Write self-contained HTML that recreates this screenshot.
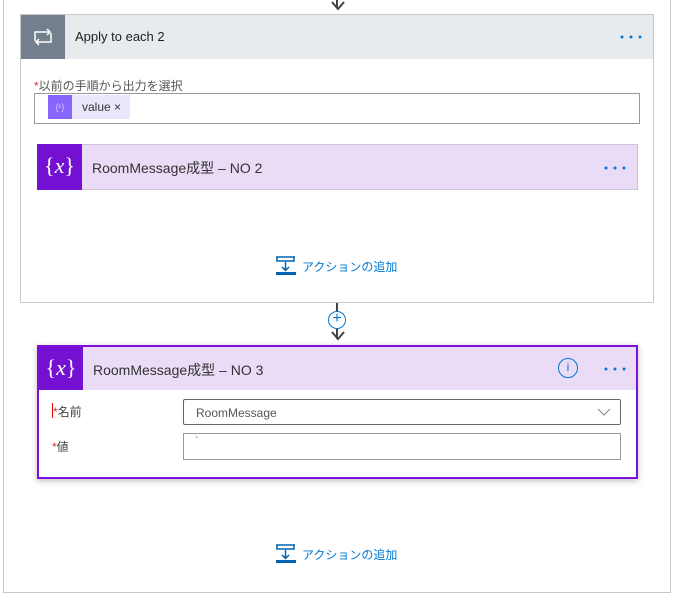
<!DOCTYPE html>
<html><head><meta charset="utf-8"><style>
*{box-sizing:border-box;margin:0;padding:0}
body{width:683px;height:595px;background:#fff;position:relative;overflow:hidden;font-family:"Liberation Sans","Noto Sans CJK JP",sans-serif;color:#333}
.a{position:absolute}
.add{color:#0078d4;font-size:12px}
</style></head><body>
<div class="a" style="left:3px;top:-2px;width:668px;height:595px;border:1px solid #c8c8c8"></div>
<div class="a" style="left:336px;top:0;width:2px;height:8px;background:#444"></div>
<svg class="a" style="left:330px;top:0" width="16" height="14"><path d="M2 2 L8 9 L14 2" stroke="#444" stroke-width="2" fill="none"/></svg>
<!-- apply to each -->
<div class="a" style="left:20px;top:14px;width:634px;height:289px;border:1px solid #c8c8c8;background:#fff"></div>
<div class="a" style="left:21px;top:15px;width:632px;height:44px;background:#e8ebee"></div>
<div class="a" style="left:21px;top:15px;width:44px;height:44px;background:#737f8c"></div>
<svg class="a" style="left:31px;top:28px" width="24" height="18"><path d="M4 13 V4 H19 M16 1 L19 4 L16 7 M20 5 V14 H5 M8 11 L5 14 L8 17" stroke="#fff" stroke-width="1.5" fill="none"/></svg>
<div class="a" style="left:75px;top:29px;font-size:13px;color:#222">Apply to each 2</div>
<svg class="a" style="left:620px;top:35px" width="22" height="4"><circle cx="2" cy="2" r="1.5" fill="#0078d4"/><circle cx="11" cy="2" r="1.5" fill="#0078d4"/><circle cx="20" cy="2" r="1.5" fill="#0078d4"/></svg>
<div class="a" style="left:34px;top:77px;font-size:12px;color:#555"><span style="color:#d13438">*</span>以前の手順から出力を選択</div>
<div class="a" style="left:34px;top:93px;width:606px;height:31px;border:1px solid #999"></div>
<div class="a" style="left:48px;top:95px;width:82px;height:24px;background:#ece6fc"></div>
<div class="a" style="left:48px;top:95px;width:24px;height:24px;background:#8766fb;color:#d8ccff;font-size:9px;text-align:center;line-height:24px">{ᵋ}</div>
<div class="a" style="left:82px;top:100px;font-size:12px;color:#333">value ×</div>
<div class="a" style="left:37px;top:144px;width:601px;height:46px;background:#eadbf7;border:1px solid #cfc3da"></div>
<div class="a" style="left:37px;top:144px;width:45px;height:46px;background:#7310d2;color:#fff;font-family:'Liberation Serif',serif;font-size:22px;text-align:center;line-height:44px">{<i>x</i>}</div>
<div class="a" style="left:92px;top:158px;font-size:14px;color:#333">RoomMessage成型 – NO 2</div>
<svg class="a" style="left:604px;top:166px" width="22" height="4"><circle cx="2" cy="2" r="1.5" fill="#0078d4"/><circle cx="11" cy="2" r="1.5" fill="#0078d4"/><circle cx="20" cy="2" r="1.5" fill="#0078d4"/></svg>
<svg class="a" style="left:275px;top:255px" width="22" height="22"><path d="M1 2 H20 M2 2 V6 H19 V2 M10.5 7 V15 M7 12 L10.5 15.5 L14 12" stroke="#0063b1" stroke-width="1.5" fill="none"/><rect x="1" y="17" width="20" height="3" fill="#0063b1"/></svg>
<div class="a add" style="left:302px;top:258px">アクションの追加</div>
<!-- connector -->
<div class="a" style="left:336px;top:303px;width:2px;height:36px;background:#444"></div>
<div class="a" style="left:328px;top:311px;width:18px;height:18px;border:1.5px solid #0078d4;border-radius:50%;background:#fff;color:#0078d4;font-size:16px;line-height:14px;text-align:center">+</div>
<svg class="a" style="left:330px;top:330px" width="16" height="14"><path d="M2 2 L8 9 L14 2" stroke="#444" stroke-width="2" fill="none"/></svg>
<!-- NO 3 -->
<div class="a" style="left:37px;top:345px;width:601px;height:134px;border:2px solid #7a10d9;background:#fff;box-shadow:0 2px 6px rgba(0,0,0,.25)"></div>
<div class="a" style="left:39px;top:347px;width:597px;height:43px;background:#eadbf7"></div>
<div class="a" style="left:39px;top:347px;width:44px;height:43px;background:#7310d2;color:#fff;font-family:'Liberation Serif',serif;font-size:22px;text-align:center;line-height:42px">{<i>x</i>}</div>
<div class="a" style="left:93px;top:360px;font-size:14px;color:#333">RoomMessage成型 – NO 3</div>
<div class="a" style="left:558px;top:358px;width:20px;height:20px;border:1.5px solid #0078d4;border-radius:50%;color:#0078d4;font-size:12px;text-align:center;line-height:17px">i</div>
<svg class="a" style="left:604px;top:367px" width="22" height="4"><circle cx="2" cy="2" r="1.5" fill="#0078d4"/><circle cx="11" cy="2" r="1.5" fill="#0078d4"/><circle cx="20" cy="2" r="1.5" fill="#0078d4"/></svg>
<div class="a" style="left:52px;top:403px;width:1px;height:15px;background:#e00"></div>
<div class="a" style="left:53px;top:403px;font-size:12px;color:#444"><span style="color:#d13438">*</span>名前</div>
<div class="a" style="left:183px;top:399px;width:438px;height:26px;border:1px solid #666;border-radius:2px"></div>
<div class="a" style="left:196px;top:406px;font-size:12px;color:#555">RoomMessage</div>
<svg class="a" style="left:597px;top:407px" width="14" height="10"><path d="M1 2 L7 8 L13 2" stroke="#888" fill="none"/></svg>
<div class="a" style="left:52px;top:438px;font-size:12px;color:#444"><span style="color:#d13438">*</span>値</div>
<div class="a" style="left:183px;top:433px;width:438px;height:27px;border:1px solid #999"></div>
<div class="a" style="left:195px;top:436px;font-size:10px;color:#555">`</div>
<svg class="a" style="left:275px;top:543px" width="22" height="22"><path d="M1 2 H20 M2 2 V6 H19 V2 M10.5 7 V15 M7 12 L10.5 15.5 L14 12" stroke="#0063b1" stroke-width="1.5" fill="none"/><rect x="1" y="17" width="20" height="3" fill="#0063b1"/></svg>
<div class="a add" style="left:302px;top:546px">アクションの追加</div>
</body></html>
